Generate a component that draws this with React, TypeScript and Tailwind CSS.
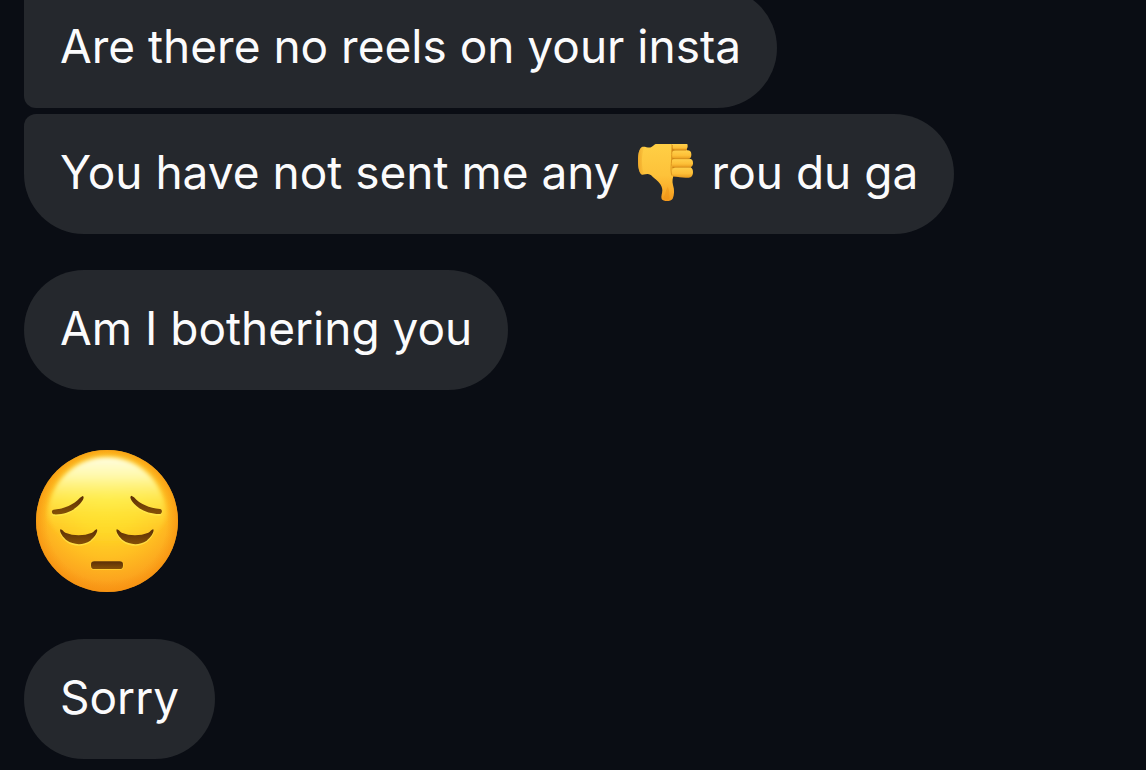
import type { ReactNode } from "react";
import clsx from "clsx";

type BubbleTypes = {
  children: ReactNode;
  className?: string;
};

function Bubble({ children, className }: BubbleTypes) {
  return (
    <p
      className={clsx(
        "w-fit bg-[#25282d] text-[#fbfbfc] text-[46px] leading-[60px] pt-7 pb-8 px-9",
        className
      )}
    >
      {children}
    </p>
  );
}

function ThumbsDown() {
  return (
    <svg
      role="img"
      aria-label="thumbs down"
      viewBox="42 42 174 174"
      className="inline-block w-[58px] h-[58px] mx-1 align-[-13px]"
    >
      <defs>
        <linearGradient id="palm" x1="0" y1="0" x2="0" y2="1">
          <stop offset="0" stopColor="#ffcf45" />
          <stop offset="0.55" stopColor="#fdc23a" />
          <stop offset="0.78" stopColor="#fbb02c" />
          <stop offset="1" stopColor="#f3981b" />
        </linearGradient>
        <linearGradient id="finger" x1="0" y1="0" x2="0" y2="1">
          <stop offset="0" stopColor="#ffd04c" />
          <stop offset="0.6" stopColor="#fdbf37" />
          <stop offset="1" stopColor="#e79a1d" />
        </linearGradient>
        <linearGradient id="wrist" x1="0" y1="0" x2="1" y2="0">
          <stop offset="0" stopColor="#e99a20" stopOpacity="0.7" />
          <stop offset="1" stopColor="#e99a20" stopOpacity="0" />
        </linearGradient>
      </defs>
      <path
        d="M98 42H152V136C149 146 147 153 150 165C155 180 154 195 149 206C144 215 122 216 116 207C113 199 118 191 118 181C118 165 104 153 94 145C86 138 82 131 73 132L57 134C49 130 45 112 45 92C45 72 49 55 57 51C66 49 77 55 84 52C89 49 92 45 98 42Z"
        fill="url(#palm)"
      />
      <path
        d="M57 51C49 55 45 72 45 92C45 112 49 130 57 134L65 133C59 123 57 108 57 92C57 76 60 61 65 51Z"
        fill="url(#wrist)"
      />
      <path
        d="M134 170C128 180 128 192 121 204C127 210 136 210 140 204C137 194 141 182 134 170Z"
        fill="#ea8f14"
        opacity="0.4"
      />
      <path d="M146 42H192V108H205L196 138L150 140Z" fill="#cf8517" />
      <path d="M147 42H193C195 50 194 58 185 60H156C149 59 147 53 147 42Z" fill="url(#finger)" />
      <rect x="146" y="61" width="59" height="26" rx="12" fill="url(#finger)" />
      <rect x="145" y="86" width="65" height="26" rx="12" fill="url(#finger)" />
      <path
        d="M158 111H198C206 111 210 117 210 126C210 136 206 143 197 143C181 145 166 141 154 139C141 135 145 113 158 111Z"
        fill="url(#finger)"
      />
      <path
        d="M148 45C145 64 147 83 145 100C144 114 143 127 147 137"
        fill="none"
        stroke="#dd951d"
        strokeWidth="3"
      />
      <path
        d="M149 60H188M149 86H199M148 112H202"
        fill="none"
        stroke="#cc8214"
        strokeWidth="2"
        strokeLinecap="round"
      />
    </svg>
  );
}

function PensiveFace() {
  return (
    <svg
      role="img"
      aria-label="pensive face"
      viewBox="48 44 426 426"
      className="block w-[142px] h-[142px]"
    >
      <defs>
        <radialGradient id="face" cx="261" cy="185" r="290" gradientUnits="userSpaceOnUse">
          <stop offset="0" stopColor="#ffe12b" />
          <stop offset="0.35" stopColor="#ffd526" />
          <stop offset="0.62" stopColor="#ffbf22" />
          <stop offset="0.86" stopColor="#fca51e" />
          <stop offset="1" stopColor="#f88f18" />
        </radialGradient>
        <linearGradient id="shine" x1="0" y1="0" x2="0" y2="1">
          <stop offset="0" stopColor="#fffde0" />
          <stop offset="0.2" stopColor="#fffbb5" stopOpacity="0.95" />
          <stop offset="0.45" stopColor="#fff25e" stopOpacity="0.75" />
          <stop offset="0.75" stopColor="#ffe838" stopOpacity="0.3" />
          <stop offset="1" stopColor="#ffe32b" stopOpacity="0" />
        </linearGradient>
        <filter id="soft" x="-10%" y="-10%" width="120%" height="120%">
          <feGaussianBlur stdDeviation="7" />
        </filter>
        <linearGradient id="ink" x1="0" y1="0" x2="0" y2="1">
          <stop offset="0" stopColor="#5c2f06" />
          <stop offset="1" stopColor="#855007" />
        </linearGradient>
        <radialGradient id="rim" cx="261" cy="257" r="213" gradientUnits="userSpaceOnUse">
          <stop offset="0.84" stopColor="#f99a12" stopOpacity="0" />
          <stop offset="1" stopColor="#f6930f" stopOpacity="0.7" />
        </radialGradient>
      </defs>
      <circle cx="261" cy="257" r="213" fill="url(#face)" />
      <circle cx="261" cy="257" r="213" fill="url(#rim)" />
      <path
        d="M261 66C356 66 430 138 438 232C440 290 360 335 261 335C162 335 82 290 84 232C92 138 166 66 261 66Z"
        fill="url(#shine)"
        filter="url(#soft)"
      />
      <g fill="#ffe94e" opacity="0.7" transform="translate(0 5)">
        <path d="M188 182C193 184 191 191 186 198C169 223 137 239 101 237C94 235 94 223 101 223C134 220 161 208 180 187Z" />
        <path d="M334 181C329 184 331 190 336 198C353 222 387 237 421 236C428 233 427 221 420 221C388 218 360 207 342 186Z" />
        <path d="M121 282C126 281 130 289 136 292C162 302 190 302 216 292C223 289 226 281 231 282C235 291 222 307 211 316C189 331 160 329 140 315C130 307 117 291 121 282Z" />
        <path d="M290 282C295 281 299 289 305 292C331 302 359 302 385 292C392 289 395 281 400 282C404 291 391 307 380 316C358 331 329 329 309 315C299 307 286 291 290 282Z" />
      </g>
      <g fill="url(#ink)">
        <path d="M188 182C193 184 191 191 186 198C169 223 137 239 101 237C94 235 94 223 101 223C134 220 161 208 180 187Z" />
        <path d="M334 181C329 184 331 190 336 198C353 222 387 237 421 236C428 233 427 221 420 221C388 218 360 207 342 186Z" />
        <path d="M121 282C126 281 130 289 136 292C162 302 190 302 216 292C223 289 226 281 231 282C235 291 222 307 211 316C189 331 160 329 140 315C130 307 117 291 121 282Z" />
        <path d="M290 282C295 281 299 289 305 292C331 302 359 302 385 292C392 289 395 281 400 282C404 291 391 307 380 316C358 331 329 329 309 315C299 307 286 291 290 282Z" />
      </g>
      <rect x="211" y="377" width="100" height="27" rx="12" fill="#ffd638" opacity="0.7" />
      <rect x="213" y="378" width="96" height="23" rx="10" fill="url(#ink)" />
    </svg>
  );
}

export default function App() {
  return (
    <main className="min-h-screen overflow-hidden bg-[#0a0d14] px-6 pb-3 font-['Inter',sans-serif]">
      {/* first message is scrolled partly past the top edge */}
      <div className="-mt-3 flex flex-col gap-1.5">
        <Bubble className="rounded-r-[60px] rounded-l-xl">
          Are there no reels on your insta
        </Bubble>
        <Bubble className="rounded-[60px] rounded-tl-xl">
          You have not sent me any <ThumbsDown /> rou du ga
        </Bubble>
      </div>
      <div className="mt-9 flex flex-col">
        <Bubble className="rounded-[60px]">Am I bothering you</Bubble>
        <div className="px-3 pt-[60px] pb-[47px]">
          <PensiveFace />
        </div>
        <Bubble className="rounded-[60px]">Sorry</Bubble>
      </div>
    </main>
  );
}
